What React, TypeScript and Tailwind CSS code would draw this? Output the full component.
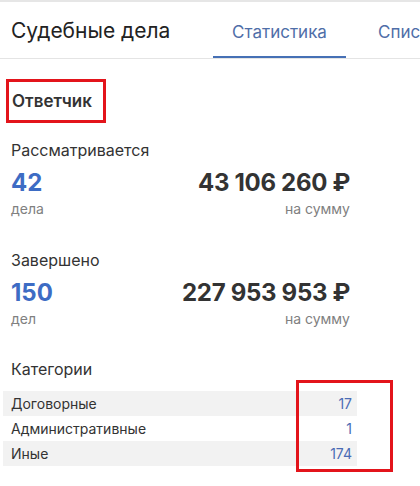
import React from "react";

const rows = [
  { name: "Договорные", value: "17", bg: "bg-[#f2f2f2]" },
  { name: "Административные", value: "1", bg: "bg-white" },
  { name: "Иные", value: "174", bg: "bg-[#f2f2f2]" },
];

function Stat({ title, count, countLabel, sum, mt }: { title: string; count: string; countLabel: string; sum: string; mt: string }) {
  return (
    <div className={mt}>
      <div className="pl-[11px] text-[16px] leading-[20px] text-[#333]">{title}</div>
      <div className="mt-[7px] flex w-[350px] justify-between pl-[11px]">
        <div className="flex flex-col">
          <div className="text-[24px] font-bold leading-[32px] text-[#3d6cc4]">{count}</div>
          <div className="text-[14px] leading-[20px] text-[#808080]">{countLabel}</div>
        </div>
        <div className="flex flex-col items-end">
          <div className="text-[24px] font-bold leading-[32px] tracking-[-0.3px] text-[#333]">{sum}</div>
          <div className="text-[14px] leading-[20px] text-[#808080]">на сумму</div>
        </div>
      </div>
    </div>
  );
}

export default function App() {
  return (
    <div className="w-[420px] h-[486px] overflow-hidden bg-white" style={{ fontFamily: "Inter, 'Noto Sans', sans-serif" }}>
      <div className="h-[2px] bg-[#e6e6e6]" />
      <div className="flex h-[57px] border-b border-[#e4e4e4] whitespace-nowrap overflow-hidden">
        <div className="w-[213px] shrink-0 pl-[11px] pt-[15px] text-[21px] leading-[28px] text-[#222]">Судебные дела</div>
        <div className="w-[133px] shrink-0 -mb-px border-b-[3px] border-[#4670b5] pt-[18px] text-center text-[17px] leading-[24px] text-[#4f6ea8]">Статистика</div>
        <div className="shrink-0 pl-[32px] pt-[18px] text-[17px] leading-[24px] text-[#4f6ea8]">Списки</div>
      </div>

      <div className="mt-[20px] ml-[6px] h-[44px] w-[100px] border-[3px] border-[#e3141b] pl-[3px] pt-[7px] text-[17px] font-semibold leading-[24px] text-[#333]">
        Ответчик
      </div>

      <Stat mt="mt-[17px]" title="Рассматривается" count="42" countLabel="дела" sum="43 106 260 ₽" />
      <Stat mt="mt-[31px]" title="Завершено" count="150" countLabel="дел" sum="227 953 953 ₽" />

      <div className="mt-[30px] pl-[11px] text-[16px] leading-[20px] text-[#333]">Категории</div>

      <div className="relative mt-[12px]">
        {rows.map((r) => (
          <div key={r.name} className={`ml-[3px] flex h-[25px] w-[354px] items-center justify-between pl-[8px] pr-[5px] text-[14px] ${r.bg}`}>
            <span className="text-[#333]">{r.name}</span>
            <span className="text-[#4a6cb5]">{r.value}</span>
          </div>
        ))}
        <div className="absolute left-[296px] top-[-11px] h-[92px] w-[97px] border-[3px] border-[#e3141b]" />
      </div>
    </div>
  );
}
